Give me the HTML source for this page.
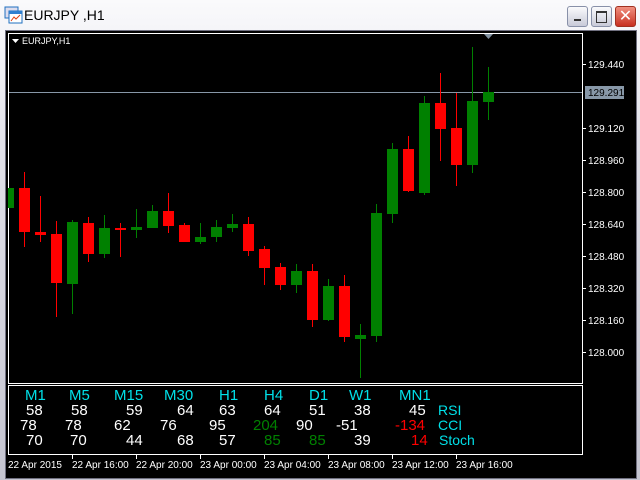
<!DOCTYPE html>
<html><head><style>
body{margin:0;width:640px;height:480px;overflow:hidden;background:#c0c0cc;font-family:"Liberation Sans",sans-serif;}
#win{position:absolute;left:0;top:0;width:640px;height:480px;background:linear-gradient(#fafafc,#e0e0e8 30%,#c4c4d0 100%);}
#title{position:absolute;left:24px;top:7px;font-size:14px;color:#000;}
.btn{position:absolute;top:6px;width:19px;height:19px;border:1px solid #8890a8;border-radius:3px;background:linear-gradient(#fafafc,#c8cad8);}
#client{position:absolute;left:5px;top:30px;width:630px;height:447px;background:#000;border:1px solid #707080;}
svg{position:absolute;left:0;top:0}
.t{position:absolute;font-size:15px;line-height:15px;color:#fff;}
.c{color:#00e0e8}.g{color:#008000}.r{color:#ff0000}
</style></head><body>
<div id="win">
<svg width="20" height="20" style="left:4px;top:6px"><rect x="1" y="1" width="13" height="11" fill="#dde" stroke="#2070c0"/><rect x="5" y="5" width="13" height="12" fill="#fff" stroke="#2070c0"/><rect x="5" y="5" width="13" height="3" fill="#3080d0"/><polyline points="7,15 10,11 12,13 16,9" stroke="#e04010" fill="none"/></svg>
<div id="title">EURJPY ,H1</div>
<div class="btn" style="left:567px"><div style="position:absolute;left:6px;top:12px;width:7px;height:2px;background:#333"></div></div>
<div class="btn" style="left:591px"><div style="position:absolute;left:4px;top:4px;width:9px;height:9px;border:1px solid #333;border-top-width:2px"></div></div>
<div class="btn" style="left:615px;background:linear-gradient(#f09080,#c83020);border-color:#a03020;color:#fff;font-size:16px;text-align:center;line-height:19px">✕</div>
<div id="client"></div>
<svg width="640" height="480">
<rect x="8.5" y="33.5" width="574" height="350" fill="none" stroke="#fff"/>
<rect x="8.5" y="385.5" width="574" height="69" fill="none" stroke="#fff"/>
<polygon points="484,34 493,34 488.5,39" fill="#8090a0"/>
<polygon points="12,39 19,39 15.5,43" fill="#fff"/>
<text x="22" y="44" font-size="9" fill="#fff" font-family="Liberation Sans">EURJPY,H1</text>
<line x1="9" y1="92.5" x2="582" y2="92.5" stroke="#8898a8"/>
<g id="cd"></g>
<g fill="#fff" font-size="10" font-family="Liberation Sans">
<line x1="582" y1="64.5" x2="586" y2="64.5" stroke="#fff"/><text x="588" y="68">129.440</text>
<line x1="582" y1="128.5" x2="586" y2="128.5" stroke="#fff"/><text x="588" y="132">129.120</text>
<line x1="582" y1="160.5" x2="586" y2="160.5" stroke="#fff"/><text x="588" y="164">128.960</text>
<line x1="582" y1="192.5" x2="586" y2="192.5" stroke="#fff"/><text x="588" y="196">128.800</text>
<line x1="582" y1="224.5" x2="586" y2="224.5" stroke="#fff"/><text x="588" y="228">128.640</text>
<line x1="582" y1="256.5" x2="586" y2="256.5" stroke="#fff"/><text x="588" y="260">128.480</text>
<line x1="582" y1="288.5" x2="586" y2="288.5" stroke="#fff"/><text x="588" y="292">128.320</text>
<line x1="582" y1="320.5" x2="586" y2="320.5" stroke="#fff"/><text x="588" y="324">128.160</text>
<line x1="582" y1="352.5" x2="586" y2="352.5" stroke="#fff"/><text x="588" y="356">128.000</text>
<rect x="585" y="86" width="39" height="13" fill="#8898a8"/><text x="588" y="96" fill="#000">129.291</text>
<text x="8" y="468">22 Apr 2015</text>
<line x1="72.5" y1="455" x2="72.5" y2="459" stroke="#fff"/><text x="72" y="468">22 Apr 16:00</text>
<line x1="136.5" y1="455" x2="136.5" y2="459" stroke="#fff"/><text x="136" y="468">22 Apr 20:00</text>
<line x1="200.5" y1="455" x2="200.5" y2="459" stroke="#fff"/><text x="200" y="468">23 Apr 00:00</text>
<line x1="264.5" y1="455" x2="264.5" y2="459" stroke="#fff"/><text x="264" y="468">23 Apr 04:00</text>
<line x1="328.5" y1="455" x2="328.5" y2="459" stroke="#fff"/><text x="328" y="468">23 Apr 08:00</text>
<line x1="392.5" y1="455" x2="392.5" y2="459" stroke="#fff"/><text x="392" y="468">23 Apr 12:00</text>
<line x1="456.5" y1="455" x2="456.5" y2="459" stroke="#fff"/><text x="456" y="468">23 Apr 16:00</text>
</g>
</svg>
<div class="t c" style="left:25px;top:388px">M1</div><div class="t c" style="left:69px;top:388px">M5</div><div class="t c" style="left:114px;top:388px">M15</div><div class="t c" style="left:164px;top:388px">M30</div><div class="t c" style="left:219px;top:388px">H1</div><div class="t c" style="left:264px;top:388px">H4</div><div class="t c" style="left:309px;top:388px">D1</div><div class="t c" style="left:349px;top:388px">W1</div><div class="t c" style="left:399px;top:388px">MN1</div>
<div class="t" style="left:26px;top:403px">58</div><div class="t" style="left:71px;top:403px">58</div><div class="t" style="left:126px;top:403px">59</div><div class="t" style="left:177px;top:403px">64</div><div class="t" style="left:219px;top:403px">63</div><div class="t" style="left:264px;top:403px">64</div><div class="t" style="left:309px;top:403px">51</div><div class="t" style="left:354px;top:403px">38</div><div class="t" style="left:409px;top:403px">45</div><div class="t c" style="left:438px;top:403px;font-size:14px">RSI</div>
<div class="t" style="left:20px;top:418px">78</div><div class="t" style="left:65px;top:418px">78</div><div class="t" style="left:114px;top:418px">62</div><div class="t" style="left:160px;top:418px">76</div><div class="t" style="left:209px;top:418px">95</div><div class="t g" style="left:253px;top:418px">204</div><div class="t" style="left:296px;top:418px">90</div><div class="t" style="left:336px;top:418px">-51</div><div class="t r" style="left:395px;top:418px">-134</div><div class="t c" style="left:438px;top:418px;font-size:14px">CCI</div>
<div class="t" style="left:26px;top:433px">70</div><div class="t" style="left:70px;top:433px">70</div><div class="t" style="left:126px;top:433px">44</div><div class="t" style="left:177px;top:433px">68</div><div class="t" style="left:219px;top:433px">57</div><div class="t g" style="left:264px;top:433px">85</div><div class="t g" style="left:309px;top:433px">85</div><div class="t" style="left:354px;top:433px">39</div><div class="t r" style="left:411px;top:433px">14</div><div class="t c" style="left:439px;top:433px;font-size:14px">Stoch</div>
</div>
<script>
var d=[[3,'g',188,208,188,208],[19,'r',188,232,172,247],[35,'r',232,235,196,242],[51,'r',234,283,221,317],[67,'g',222,284,220,314],[83,'r',223,254,217,262],[99,'g',228,254,215,258],[115,'r',228,230,223,257],[131,'g',227,230,209,238],[147,'g',211,228,205,228],[163,'r',211,226,193,233],[179,'r',225,242,223,242],[195,'g',237,242,223,244],[211,'g',227,237,220,242],[227,'g',224,228,214,232],[243,'r',224,251,217,256],[259,'r',249,268,246,285],[275,'r',267,285,263,290],[291,'g',271,285,264,293],[307,'r',271,320,264,327],[323,'g',286,320,279,321],[339,'r',286,337,275,342],[355,'g',335,339,324,378],[371,'g',213,336,204,342],[387,'g',149,214,143,223],[403,'r',149,191,136,192],[419,'g',103,193,96,195],[435,'r',103,129,73,161],[451,'r',128,165,93,186],[467,'g',101,165,47,173],[483,'g',92,102,67,120]];
var s='';d.forEach(function(c){var col=c[1]=='g'?'#008000':'#ff0000';var x=c[0];
s+='<rect x="'+(x+5)+'" y="'+c[4]+'" width="1" height="'+(c[5]-c[4])+'" fill="'+col+'"/>';
var bx=Math.max(x,9);s+='<rect x="'+bx+'" y="'+c[2]+'" width="'+(x+11-bx)+'" height="'+Math.max(c[3]-c[2],2)+'" fill="'+col+'"/>';});
document.getElementById('cd').innerHTML=s;
</script>
</body></html>
